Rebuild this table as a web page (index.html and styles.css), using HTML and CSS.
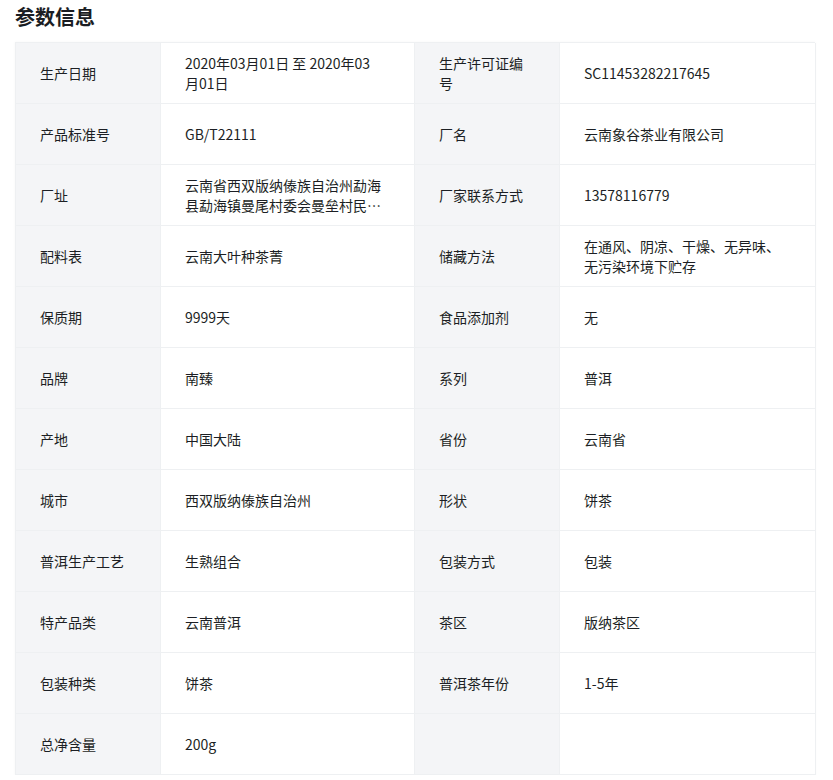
FILE: index.html
```html
<!DOCTYPE html>
<html lang="zh-CN">
<head>
<meta charset="utf-8">
<title>参数信息</title>
<link rel="stylesheet" href="styles.css">
</head>
<body>
<div class="page">
  <h2 class="title">参数信息</h2>
  <div class="params">
    <div class="k">生产日期</div><div class="v">2020年03月01日 至 2020年03月01日</div>
    <div class="k">生产许可证编号</div><div class="v">SC11453282217645</div>

    <div class="k">产品标准号</div><div class="v">GB/T22111</div>
    <div class="k">厂名</div><div class="v">云南象谷茶业有限公司</div>

    <div class="k">厂址</div><div class="v"><span class="clamp">云南省西双版纳傣族自治州勐海县勐海镇曼尾村委会曼垒村民小组</span></div>
    <div class="k">厂家联系方式</div><div class="v">13578116779</div>

    <div class="k">配料表</div><div class="v">云南大叶种茶菁</div>
    <div class="k">储藏方法</div><div class="v">在通风、阴凉、干燥、无异味、无污染环境下贮存</div>

    <div class="k">保质期</div><div class="v">9999天</div>
    <div class="k">食品添加剂</div><div class="v">无</div>

    <div class="k">品牌</div><div class="v">南臻</div>
    <div class="k">系列</div><div class="v">普洱</div>

    <div class="k">产地</div><div class="v">中国大陆</div>
    <div class="k">省份</div><div class="v">云南省</div>

    <div class="k">城市</div><div class="v">西双版纳傣族自治州</div>
    <div class="k">形状</div><div class="v">饼茶</div>

    <div class="k">普洱生产工艺</div><div class="v">生熟组合</div>
    <div class="k">包装方式</div><div class="v">包装</div>

    <div class="k">特产品类</div><div class="v">云南普洱</div>
    <div class="k">茶区</div><div class="v">版纳茶区</div>

    <div class="k">包装种类</div><div class="v">饼茶</div>
    <div class="k">普洱茶年份</div><div class="v">1-5年</div>

    <div class="k">总净含量</div><div class="v">200g</div>
    <div class="k"></div><div class="v"></div>
  </div>
</div>
</body>
</html>
```

FILE: styles.css
```css
html, body {
  margin: 0;
  padding: 0;
  background: #ffffff;
}
body {
  font-family: "Noto Sans CJK SC", "Noto Sans", sans-serif;
  color: #1c1f24;
}
.page {
  padding: 4px 18px 0 15px;
}
.title {
  margin: 0 0 12px 0;
  font-size: 20px;
  line-height: 26px;
  font-weight: 700;
  color: #1a1d23;
}
.params {
  display: grid;
  grid-template-columns: 145px 254px 145px 256px;
  grid-auto-rows: 61px;
  border: 1px solid #eef0f2;
  border-right: 0;
  border-bottom: 0;
  box-shadow: 0 0 3px rgba(0, 0, 0, 0.04);
}
.k, .v {
  display: flex;
  align-items: center;
  font-size: 14px;
  line-height: 20px;
  border-right: 1px solid #eef0f2;
  border-bottom: 1px solid #eef0f2;
  box-sizing: border-box;
}
.k {
  background: #f4f5f7;
  padding: 0 24px 0 24px;
}
.v {
  background: #ffffff;
  padding: 0 33px 0 24px;
}
.clamp {
  display: -webkit-box;
  -webkit-box-orient: vertical;
  -webkit-line-clamp: 2;
  overflow: hidden;
}
```
